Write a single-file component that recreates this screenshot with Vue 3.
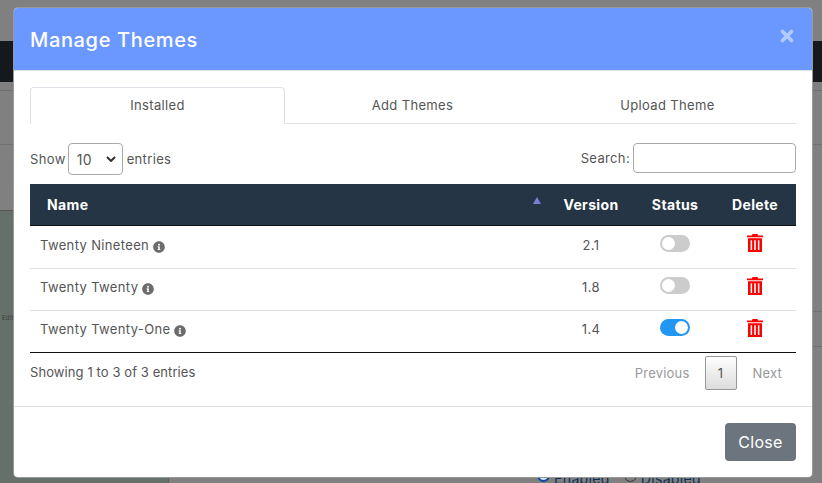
<script setup>
const themes = [
  { name: 'Twenty Nineteen', version: '2.1', on: false },
  { name: 'Twenty Twenty', version: '1.8', on: false },
  { name: 'Twenty Twenty-One', version: '1.4', on: true },
]
const tabs = ['Installed', 'Add Themes', 'Upload Theme']
</script>

<template>
  <div class="page">
    <div class="backdrop">
      <div class="bd-top"></div>
      <div class="bd-nav"></div>
      <div class="bd-strip">
        <div class="bd-line first"></div>
        <div class="bd-line second"></div>
      </div>
      <div class="bd-main">
        <div class="bd-side"><span class="bd-edit">Edit</span></div>
        <div class="bd-content">
          <div class="bd-line third"></div>
          <div class="bd-line fourth"></div>
          <div class="bd-radios">
            <span class="radio on"></span><span>Enabled</span>
            <span class="radio off"></span><span>Disabled</span>
          </div>
        </div>
      </div>
    </div>

    <div class="modal">
      <header class="modal-head">
        <h1>Manage Themes</h1>
        <svg class="x" viewBox="0 0 14 14" width="14" height="14"><path d="M2.500 2.500l9 9M11.500 2.500l-9 9" stroke="#fff" stroke-width="3.600" stroke-linecap="round"/></svg>
      </header>
      <div class="modal-body">
        <nav class="tabs">
          <a v-for="(t, i) in tabs" :key="t" class="tab" :class="{ active: i === 0 }">{{ t }}</a>
        </nav>
        <div class="controls">
          <label class="show">Show
            <span class="select">10<svg viewBox="0 0 10 6" width="10" height="6"><path d="M1 1l4 4 4-4" fill="none" stroke="#333" stroke-width="2"/></svg></span>
            entries</label>
          <label class="search">Search:<span class="input"></span></label>
        </div>
        <table>
          <thead>
            <tr>
              <th class="name">Name<span class="sort"></span></th>
              <th class="ver">Version</th>
              <th class="stat">Status</th>
              <th class="del">Delete</th>
            </tr>
          </thead>
          <tbody>
            <tr v-for="t in themes" :key="t.name">
              <td class="cell-name">{{ t.name }}
                <svg class="info" viewBox="0 0 512 512" width="12" height="12"><path fill="#6c6c6c" d="M256 8C119 8 8 119 8 256s111 248 248 248 248-111 248-248S393 8 256 8zm0 110a42 42 0 1 1 0 84 42 42 0 0 1 0-84zm56 254c0 7-5 12-12 12h-88c-7 0-12-5-12-12v-24c0-7 5-12 12-12h12v-64h-12c-7 0-12-5-12-12v-24c0-7 5-12 12-12h64c7 0 12 5 12 12v100h12c7 0 12 5 12 12z"/></svg>
              </td>
              <td class="center">{{ t.version }}</td>
              <td class="center"><span class="switch" :class="{ on: t.on }"><i></i></span></td>
              <td class="center">
                <svg class="trash" viewBox="0 0 16 18" width="16" height="18"><path fill="#f00" d="M5.500 0h5l.6 1.500H16v1.700H0V1.500h4.900zM1 4.200h14V18H1zm2.600 2v9.800h1.500V6.200zm3.600 0v9.800h1.600V6.200zm3.700 0v9.800h1.500V6.200z" fill-rule="evenodd"/></svg>
              </td>
            </tr>
          </tbody>
        </table>
        <div class="foot-row">
          <span class="info-text">Showing 1 to 3 of 3 entries</span>
          <div class="pager">
            <a>Previous</a><a class="cur">1</a><a>Next</a>
          </div>
        </div>
      </div>
      <footer class="modal-foot"><button>Close</button></footer>
    </div>
  </div>
</template>

<style>
html, body { margin: 0; padding: 0; }
</style>

<style scoped>
.page { position: relative; width: 822px; height: 483px; overflow: hidden; background: #808080; font-family: "Inter", "Open Sans", sans-serif; color: #555; font-size: 13px; letter-spacing: .35px; }
.backdrop { height: 100%; display: flex; flex-direction: column; }
.bd-top { height: 41px; flex: none; }
.bd-nav { height: 41px; flex: none; background: #15191d; }
.bd-strip { height: 128px; flex: none; }
.bd-line { box-sizing: border-box; border-bottom: 1px solid #707070; }
.bd-line.first { height: 9px; }
.bd-line.second { height: 54px; }
.bd-line.third { height: 102px; }
.bd-line.fourth { height: 35px; }
.bd-main { flex: 1; display: flex; min-height: 0; }
.bd-side { width: 169px; box-sizing: border-box; background: #66706a; border-top: 1px solid #555; border-right: 1px solid #5f5f5f; }
.bd-edit { display: block; font-size: 6px; margin: 103px 0 0 2px; color: #3a3f3c; letter-spacing: .2px; }
.bd-content { flex: 1; display: flex; flex-direction: column; }
.bd-radios { display: flex; align-items: center; margin: auto 0 -5px 368px; color: #0b2f55; font-size: 14px; height: 20px; gap: 4px; }
.radio { width: 13px; height: 13px; box-sizing: border-box; border-radius: 50%; flex: none; margin-top: -6px; }
.radio.on { border: 2px solid #0b4aa0; background: radial-gradient(circle, #0b4aa0 0 38%, #d7e0ee 42%); }
.radio.off { border: 1px solid #333; margin-left: 10px; }

.modal { position: absolute; left: 13px; top: 7px; width: 798px; height: 469px; background: #fff; border: 1px solid rgba(0, 0, 0, .4); border-radius: 5px; overflow: hidden; display: flex; flex-direction: column; }
.modal-head { height: 63px; flex: none; box-sizing: border-box; background: #6a98ff; border-bottom: 1px solid #dee2e6; padding: 0 18px 0 16px; display: flex; justify-content: space-between; align-items: flex-start; }
.modal-head h1 { margin: 17px 0 0; font-size: 20px; font-weight: 500; color: #fff; line-height: 30px; letter-spacing: .65px; }
.x { margin: 21px 0 0; opacity: .5; }
.modal-body { flex: 1; padding: 16px 16px 0; }
.tabs { display: flex; height: 37px; box-sizing: border-box; border-bottom: 1px solid #dee2e6; }
.tab { flex: 0 0 255px; text-align: center; line-height: 36px; height: 37px; box-sizing: border-box; }
.tab.active { background: #fff; border: 1px solid #dee2e6; border-bottom-color: #fff; border-radius: 4px 4px 0 0; line-height: 35px; }
.controls { display: flex; justify-content: space-between; height: 60px; align-items: flex-start; padding-top: 19px; box-sizing: border-box; }
.show, .search { display: flex; align-items: center; }
.show { height: 32px; gap: 2px; }
.select { width: 55px; height: 32px; box-sizing: border-box; border: 1px solid #aaa; border-radius: 4px; display: flex; align-items: center; justify-content: space-between; padding: 0 6px 0 8px; color: #555; font-size: 14px; margin-right: 2px; }
.search { gap: 3px; height: 30px; }
.input { width: 161px; height: 28px; border: 1px solid #aaa; border-radius: 4px; background: #fff; }
table { width: 766px; border-collapse: collapse; table-layout: fixed; border-bottom: 1px solid #111; }
thead tr { background: #253545; height: 41px; border-bottom: 1px solid #111; }
th { color: #fff; font-size: 14px; font-weight: 700; text-align: center; padding: 0; }
th.name { text-align: left; padding-left: 17px; position: relative; }
th.ver { width: 90px; }
th.stat { width: 78px; }
th.del { width: 82px; }
.sort { position: absolute; right: 5px; top: 13px; border: 4.500px solid transparent; border-top: 0; border-bottom: 7px solid #7a7fd6; }
tbody tr { height: 42px; border-bottom: 1px solid #dee2e6; }
tbody tr:first-child { height: 43px; }
tbody tr:last-child { border-bottom: 0; }
td { padding: 0 0 4px; color: #555; }
.cell-name { padding-left: 10px; }
.info { vertical-align: -3px; margin-left: 0; }
.center { text-align: center; }
.switch { display: inline-block; width: 30px; height: 17px; border-radius: 9px; background: #ccc; position: relative; vertical-align: middle; margin-top: -5px; }
.switch i { position: absolute; left: 2px; top: 2px; width: 13px; height: 13px; border-radius: 50%; background: #fff; }
.switch.on { background: #2196f3; }
.switch.on i { left: 15px; }
.trash { vertical-align: middle; margin-top: -5px; }
.foot-row { display: flex; justify-content: space-between; align-items: flex-start; padding-top: 3px; }
.info-text { margin-top: 8px; letter-spacing: .09px; }
.pager { display: flex; align-items: center; color: #999; letter-spacing: .2px; }
.pager a { padding: 0 14px; line-height: 32px; }
.pager a.cur { padding: 0; width: 30px; height: 32px; margin: 0 2px 0 1px; text-align: center; color: #555; border: 1px solid #979797; border-radius: 2px; background: linear-gradient(#fff, #dcdcdc); }
.modal-foot { height: 71px; flex: none; box-sizing: border-box; border-top: 1px solid #dee2e6; padding: 16px; display: flex; justify-content: flex-end; }
button { width: 71px; height: 38px; border: 0; border-radius: 4px; background: #6c757d; color: #fff; font: 16px "Inter", sans-serif; letter-spacing: .3px; }
</style>
